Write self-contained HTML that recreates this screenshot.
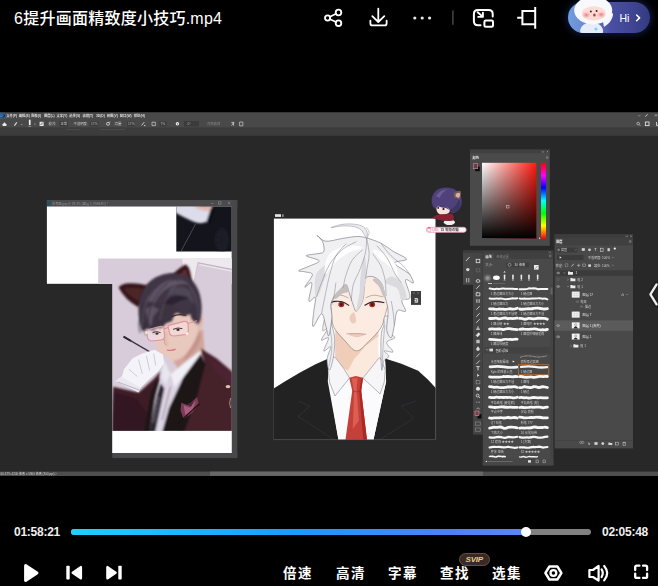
<!DOCTYPE html>
<html lang="zh-CN">
<head>
<meta charset="utf-8">
<title>6提升画面精致度小技巧.mp4</title>
<style>
html,body{margin:0;padding:0;background:#000;}
body{width:658px;height:586px;position:relative;overflow:hidden;font-family:"Liberation Sans","Noto Sans CJK SC",sans-serif;color:#fff;}
.abs{position:absolute;}
#title{left:14px;top:7.2px;font-size:16px;line-height:24px;font-weight:500;white-space:nowrap;letter-spacing:0.25px;}
#video{left:0;top:112px;width:658px;height:364px;}
.time{font-size:12px;line-height:14px;font-weight:700;top:525px;white-space:nowrap;letter-spacing:-0.25px;color:#efefef;}
.ctl{font-size:13.5px;line-height:20px;font-weight:700;top:563.8px;white-space:nowrap;letter-spacing:1.5px;}
#track{left:71px;top:529px;width:520px;height:6px;border-radius:3px;background:#808080;}
#prog{left:71px;top:529px;width:455px;height:6px;border-radius:3px;background:linear-gradient(90deg,#1fd0ff 0%,#1a9bff 50%,#4f80f6 85%,#5c86f6 100%);}
#knob{left:521px;top:527px;width:10px;height:10px;border-radius:50%;background:#fff;}
</style>
</head>
<body>
<div id="title" class="abs">6提升画面精致度小技巧.mp4</div>

<!-- top icons -->
<svg id="topicons" class="abs" style="left:300px;top:0" width="358" height="46" viewBox="300 0 358 46" fill="none" stroke="#fff" stroke-width="1.8" stroke-linecap="round" stroke-linejoin="round">
<!-- share -->
<circle cx="327.6" cy="18" r="2.6"/><circle cx="338.5" cy="12.5" r="2.8"/><circle cx="338.5" cy="23.2" r="2.8"/>
<path d="M330 16.8 L336 13.8 M330 19.2 L336 22"/>
<!-- download -->
<path d="M378.3 8.6 V21.6 M372.3 16.2 L378.3 22 L384.3 16.2 M370.4 20.6 V23.4 Q370.4 25.4 372.4 25.4 H384.6 Q386.6 25.4 386.6 23.4 V20.6"/>
<!-- more -->
<g fill="#e6e6e6" stroke="none"><circle cx="414.8" cy="18" r="1.6"/><circle cx="422.2" cy="18" r="1.6"/><circle cx="429.6" cy="18" r="1.6"/></g>
<path d="M452.9 11 V24.2" stroke="#4a4a4f" stroke-width="1.4"/>
<!-- pip -->
<g stroke-width="2">
<path d="M480.5 25.2 H478 Q473.9 25.2 473.9 21.2 V14 Q473.9 10 478 10 H488.6 Q492.7 10 492.7 14 V16.4"/>
<rect x="484.4" y="20.6" width="8.6" height="6.2" rx="1.4"/>
<path d="M477.7 12.3 L482.6 16.6 M478.2 16.9 H482.9 V12.6" stroke-width="1.9"/>
</g>
<!-- crop/rotate -->
<path d="M535.2 7 V28.8 M535.2 11 H522.4 V24.3 H535.2 M517.2 17.8 H522.4" stroke-width="2" stroke-linecap="butt" stroke-linejoin="miter"/>
</svg>


<!-- Hi pill -->
<div class="abs" id="hipill" style="left:568px;top:2px;width:82px;height:31px;border-radius:16px;background:linear-gradient(90deg,#6f9fe0 0%,#6b86cf 22%,#4a4fa2 52%,#3f4593 78%,#343a80 100%);box-shadow:0 0 7px 2px rgba(30,45,110,0.55);"></div>
<svg class="abs" style="left:560px;top:0" width="98" height="40" viewBox="560 0 98 40">
<defs><clipPath id="pillclip"><rect x="568" y="-10" width="82" height="43" rx="15.5"/></clipPath>
<radialGradient id="cheek"><stop offset="0" stop-color="#f5707e"/><stop offset="1" stop-color="#f9b5b5" stop-opacity="0"/></radialGradient></defs>
<g clip-path="url(#pillclip)">
<ellipse cx="591.6" cy="31" rx="11.4" ry="9" fill="#e6edf9"/>
<path d="M603 22 Q609 19 611 13 Q613 12 613 15 Q612 22 604 27 Z" fill="#f4f7fc"/>
<ellipse cx="593.2" cy="10.4" rx="19" ry="14" fill="#f7f9fd"/>
<ellipse cx="593.8" cy="13.4" rx="11.8" ry="7.2" fill="#fbdcd6"/>
<ellipse cx="586.3" cy="15" rx="4.8" ry="3.6" fill="url(#cheek)"/>
<ellipse cx="601.2" cy="14.6" rx="4.8" ry="3.6" fill="url(#cheek)"/>
<circle cx="590.8" cy="11.6" r="1" fill="#5a1a22"/><circle cx="596.6" cy="11" r="1" fill="#5a1a22"/>
<ellipse cx="594.4" cy="15" rx="1.3" ry="1.6" fill="#d5303a"/>
<circle cx="596" cy="29" r="1.6" fill="#7fd0ee"/>
</g>
<path d="M636.6 15 L639.6 17.9 L636.6 20.8" fill="none" stroke="#fff" stroke-width="1.5" stroke-linecap="round" stroke-linejoin="round"/>
</svg>
<div class="abs" style="left:619.5px;top:11px;font-size:10.5px;line-height:14px;font-weight:400;color:#fff">Hi</div>

<!-- video frame -->
<svg id="video" class="abs" width="658" height="364" viewBox="0 112 658 364">
<defs>
<filter id="b1" x="-20%" y="-20%" width="140%" height="140%"><feGaussianBlur stdDeviation="0.45"/></filter>
<filter id="b2" x="-20%" y="-20%" width="140%" height="140%"><feGaussianBlur stdDeviation="0.8"/></filter>
<filter id="b3" x="-20%" y="-20%" width="140%" height="140%"><feGaussianBlur stdDeviation="1.5"/></filter>
</defs>
<rect x="0" y="112" width="658" height="364" fill="#282828"/>
<rect x="0" y="112" width="658" height="0.5" fill="#111"/>
<rect x="0" y="112.4" width="658" height="15.4" fill="#494949"/>
<rect x="0" y="127.8" width="658" height="8" fill="#3c3c3c"/>
<rect x="0" y="471.6" width="658" height="4.4" fill="#4e4e4e"/>
<rect x="210" y="471.6" width="273" height="4.2" fill="#686868"/>
<!-- ps logo -->
<path d="M0 113.2 H3.2 Q5.4 113.4 5.6 115.6 Q5.4 117.8 3.2 118 H0 Z" fill="#12345c" stroke="#3f8fd8" stroke-width="0.5" filter="url(#b1)"/>
<path d="M0.3 115 H3.6 M0.3 116.4 H2.6" stroke="#7fc0ff" stroke-width="0.6" filter="url(#b1)"/>
<!-- menu text -->
<g font-family="'Liberation Sans','Noto Sans CJK SC',sans-serif" font-size="3.3" font-weight="700" fill="#dedede" filter="url(#b1)">
<text x="6.2" y="116.9">文件(F)</text><text x="18.8" y="116.9">编辑(E)</text><text x="31.3" y="116.9">图像(I)</text><text x="43.9" y="116.9">图层(L)</text><text x="56.4" y="116.9">文字(Y)</text><text x="69.2" y="116.9">选择(S)</text><text x="82.4" y="116.9">滤镜(T)</text><text x="96" y="116.9">3D(D)</text><text x="106.8" y="116.9">视图(V)</text><text x="119.8" y="116.9">窗口(W)</text><text x="133.8" y="116.9">帮助(H)</text>
</g>
<!-- options bar -->
<g filter="url(#b1)">
<path d="M2.6 124.2 L4.5 122.2 L6.4 124.2 V126 H2.6 Z" fill="#e8e8e8"/>
<path d="M14.4 125.6 L16.8 122.4" stroke="#dcdcdc" stroke-width="1.1"/>
<rect x="20.6" y="124" width="2" height="0.6" fill="#9a9a9a"/>
<rect x="28.9" y="119.6" width="1.7" height="5.6" rx="0.8" fill="#f2f2f2"/>
<rect x="28.4" y="126" width="2.8" height="0.6" fill="#b0b0b0"/>
<rect x="34" y="123.6" width="1.6" height="1" fill="#8a8a8a"/>
<rect x="39.6" y="121.8" width="4" height="4.2" fill="#e4e4e4"/>
<path d="M40.6 125 L42.8 122.6" stroke="#444" stroke-width="0.8"/>
<rect x="59.5" y="121.4" width="8.5" height="5" fill="#3a3a3a"/>
<rect x="89.6" y="121.4" width="9" height="5" fill="#3d3d3d"/>
<rect x="127" y="121.4" width="7.6" height="5" fill="#3d3d3d"/>
<rect x="159.4" y="121.4" width="7.4" height="5" fill="#3d3d3d"/>
<rect x="184" y="121.2" width="15" height="5.2" fill="#3a3a3a"/>
<g font-family="'Liberation Sans','Noto Sans CJK SC',sans-serif" font-size="3.3" fill="#cfcfcf">
<text x="48.6" y="125.2">模式:</text><text x="60.4" y="125.2">正常</text><text x="73.6" y="125.2">不透明度:</text><text x="91" y="125.2" fill="#b8b8b8">17%</text>
<text x="114.6" y="125.2">流量:</text><text x="128" y="125.2" fill="#b8b8b8">17%</text><text x="160.4" y="125.2" fill="#b8b8b8">7%</text>
<text x="187.6" y="125.2" fill="#b8b8b8">0°</text><text x="207" y="125.2" fill="#8a8a8a">对称选项</text>
</g>
<circle cx="108" cy="123.8" r="1.5" fill="none" stroke="#dadada" stroke-width="0.8"/><path d="M108.6 123.2 L110 121.6" stroke="#dadada" stroke-width="0.7"/>
<path d="M141.6 125.4 L144.2 122.2 M144 125.6 h1.4" stroke="#d8d8d8" stroke-width="0.9"/>
<path d="M152 122.2 h3.4 v3.4 h-3.4 z" stroke="#d0d0d0" stroke-width="0.7" fill="none"/>
<circle cx="177.4" cy="123.8" r="1.7" fill="#ececec"/><circle cx="177.4" cy="123.8" r="0.6" fill="#555"/>
<path d="M231.6 125.4 L234 122.4 M231.4 122.4 h2 v3.2" stroke="#d8d8d8" stroke-width="0.8" fill="none"/>
<path d="M239.6 122 h3.2 v3.8 h-3.2 z" stroke="#cfcfcf" stroke-width="0.7" fill="none"/>
<rect x="66" y="129.2" width="14" height="0.6" fill="#565656"/><rect x="100" y="129.2" width="25" height="0.6" fill="#565656"/>
<!-- right window controls -->
<path d="M638 115.8 h2.4" stroke="#9a9a9a" stroke-width="0.7"/>
<path d="M645.2 116.6 l2.4 -2.2" stroke="#c8c8c8" stroke-width="1"/>
<path d="M655 114.4 l2 2 m0 -2 l-2 2" stroke="#c8c8c8" stroke-width="0.7"/>
<circle cx="638.2" cy="123.6" r="1.3" fill="none" stroke="#d0d0d0" stroke-width="0.7"/><path d="M639.2 124.6 l1.2 1.2" stroke="#d0d0d0" stroke-width="0.7"/>
<rect x="645.4" y="122" width="3.6" height="3.6" fill="none" stroke="#e0e0e0" stroke-width="0.9"/>
<path d="M656.6 122 v3.6 h1.4" fill="none" stroke="#e0e0e0" stroke-width="0.9"/>
</g>
<text x="0.6" y="474.9" font-family="'Liberation Sans','Noto Sans CJK SC',sans-serif" font-size="3" fill="#cfcfcf" filter="url(#b1)">66.67%   4200 像素 x 5800 像素 (300 ppi)   〉</text>
<!-- left reference window -->
<g id="leftwin">
<rect x="46.8" y="200" width="190.5" height="6.6" fill="#4b4b4d"/>
<rect x="231.7" y="200" width="5.6" height="258.1" fill="#48484b"/>
<rect x="112.2" y="452" width="125.1" height="6.1" fill="#48484b"/>
<rect x="46.9" y="206.5" width="184.8" height="77.3" fill="#ffffff"/>
<rect x="47.4" y="201.6" width="3" height="3.6" fill="#0c5c6e" filter="url(#b1)"/>
<text x="52" y="205" font-family="'Liberation Sans','Noto Sans CJK SC',sans-serif" font-size="3.2" fill="#8e8e8e" filter="url(#b1)">参考图.jpg @ 33.3% (图层 1, RGB/8#) *</text>
<g stroke="#8a8a8a" stroke-width="0.6" fill="none" filter="url(#b1)"><path d="M211 203.6 h2.6"/><rect x="218.4" y="201.8" width="2.6" height="2.4"/><path d="M227.8 201.8 l2.4 2.4 m0 -2.4 l-2.4 2.4"/></g>
<!-- dark photo top-right -->
<clipPath id="cpA"><rect x="176.3" y="206.5" width="55.4" height="45.1"/></clipPath>
<g clip-path="url(#cpA)">
<rect x="176" y="205" width="56" height="47" fill="#14141c"/>
<g filter="url(#b2)">
<path d="M175 204 H213 L206.5 222 Q200 224.5 193 221.5 Q183 217 175 212.5 Z" fill="#dcdcea"/>
<path d="M194 204 H213 L210.5 211 Q202 211.5 194 207 Z" fill="#e2b8b0"/>
<path d="M200 204 h13 v2 h-13z" fill="#2a1a1a"/>
<path d="M206.5 222 L211 208 L214 208 L209 224 Z" fill="#0d0d14"/>
</g>
<path d="M195.6 224 L180.6 252" stroke="#5c5c72" stroke-width="0.7" filter="url(#b1)"/>
<ellipse cx="222" cy="240" rx="7" ry="12" fill="#1c1c26" filter="url(#b3)"/>
</g>
</g>
<!-- main photo (cat-ear man) -->
<clipPath id="cpB"><path d="M98.2 258.5 H231.8 V430.9 H112.2 V283.8 H98.2 Z"/></clipPath>
<g clip-path="url(#cpB)">
<rect x="98" y="258" width="134" height="174" fill="#d8ccda"/>
<!-- window frame bg top-right -->
<g filter="url(#b1)" fill="none">
<path d="M182 258 L232 258 L232 269 L198 262.4 L192.6 292 L187 292 Z" fill="#eee9ee"/>
<path d="M197.8 262.6 L232 269.4" stroke="#aaa0aa" stroke-width="0.6"/>
<path d="M197.8 262.6 L192.8 288" stroke="#b0a6b0" stroke-width="0.5"/>
<path d="M199.4 264.6 L232 271.2" stroke="#f0ecf0" stroke-width="1"/>
</g>
<rect x="98" y="405" width="134" height="27" fill="#cfc4d2" filter="url(#b3)"/>
<!-- ears -->
<g filter="url(#b2)">
<path d="M118.6 287.6 Q121 283.4 130 283.2 Q141 283 149.6 286.4 L150 298 L138 307 Q125 300 118.6 287.6 Z" fill="#35191b"/>
<path d="M124 288.6 Q133 286 143 289 L139 301 Q129 296.6 124 288.6 Z" fill="#4c2628"/>
<path d="M170 279 Q175 270 185.4 264.6 Q189.6 266 191 276 Q192.4 286 194 297 L178 293 Z" fill="#35191b"/>
<path d="M177 279 Q181.6 271.6 186 269 Q188.6 277 190 290 L181.6 287 Z" fill="#5e2e30"/>
</g>
<!-- neck + face -->
<g filter="url(#b2)">
<path d="M186 332 Q196 335 203 329 L204.6 352 Q196 367 182 374 L173 361 Z" fill="#d2a69c"/>
<path d="M151 322 Q151.6 337 155.6 346 Q161 356 173 361 Q180 360.4 187 353 Q195 343 199.6 329 Q202 320 199 310 L170 304 Z" fill="#e9c8be"/>
<path d="M187 353 Q195 343 199.6 329 L201 338 Q195 354 183 361.6 Z" fill="#c4948a"/>
<path d="M198 316 Q203.6 314 203 322 Q202 329 198 331 Z" fill="#e2b8ac"/>
<path d="M166 332 Q164.6 342 167.6 346" stroke="#d8aa9e" stroke-width="1.2" fill="none"/>
</g>
<!-- hair -->
<g filter="url(#b2)">
<path d="M142.3 331.5 Q138 322 138.4 306 Q139.6 293 147 284 Q156 274.6 170.2 273 Q181 272.6 189 277.6 Q197 284 200 295 Q203 307 200.6 319 Q199.4 323.6 196.6 325 Q197.6 318 192 313 Q187 316.6 182.4 315.6 Q176 312 172.7 310.8 Q167 315 163 320.5 Q160 327 154.4 330.2 Q151 331 147.1 327.8 Q145 330 142.3 331.5 Z" fill="#3f3644"/>
<path d="M149 300 Q154 288 166 282 Q178 278 190 284 Q180 283 170 287 Q160 292 155 302 Q150 312 149.6 322 Q146 311 149 300 Z" fill="#5e5566"/>
<path d="M170 288 Q181 284 193 292 Q197 300 197 310 Q192 300 184 296 Q176 293 168 296 Z" fill="#4e4656"/>
<path d="M158 312 Q162 302 171 297 Q180 294 190 298 Q180 300 173 304.6 Q167 309 163 318 Z" fill="#2c2430"/>
<path d="M143 316 Q144 304 150 296 M146 322 Q147.6 312 153 304" stroke="#6a6072" stroke-width="0.8" fill="none"/>
<path d="M139.2 306.1 L140.8 323.0 L144.1 329.9 L148.1 328.4 L150.7 330.7 L154.6 326.4 L160.7 328.9 L166.1 323.3 L171.8 321.2 L174.8 314.1 L180.7 310.8 L169.9 304.6 L148.4 301.5 Z" fill="#3c3340"/>
<path d="M189.1 309.2 L191.4 318.4 L195.3 323.0 L198.3 316.9 L199.9 309.2 L194.5 303.1 Z" fill="#3c3340"/>
<path d="M145.4 309.2 L148.4 323.0 L151.5 326.1 L153.0 316.9 L159.2 309.2 L151.5 306.1 Z" fill="#5a5162"/>
<g fill="none" stroke="#6d6374" stroke-width="0.7" opacity="0.85">
<path d="M172 279 Q156 284 147 300 Q142 312 142 326"/>
<path d="M176 280 Q162 288 154 302 Q149 314 150 328"/>
<path d="M180 281 Q170 290 164 304 Q161 312 160 320"/>
<path d="M182 280 Q192 286 196 298 Q199 308 198 318"/>
<path d="M178 279 Q188 283 193 292"/>
</g>
<g fill="none" stroke="#2a2230" stroke-width="0.8">
<path d="M168 283 Q156 292 151 306 Q148 316 148 326"/>
<path d="M186 284 Q193 292 195 304"/>
<path d="M139.6 318 Q138 326 140 333 M144.6 322 Q144 330 146 335 M152 326 Q152.6 331 155 334"/>
</g>
</g>
<!-- glasses -->
<g filter="url(#b1)" fill="none" stroke="#dd93a8" stroke-width="1.1">
<path d="M146.6 332 Q147 329.6 150 329 L160.6 326.4 Q163.6 326 164 329 L164.6 336 Q164.6 339.6 161 340 L152 341 Q148.6 341 147.6 337.6 Z" fill="rgba(255,245,248,0.35)"/>
<path d="M168 325.6 L184 321.4 Q187.6 321 188 324 L188.4 330.6 Q188 334 185 334.6 L174 336 Q170 336 169.4 332.6 Z" fill="rgba(255,245,248,0.35)"/>
<path d="M164 329 L168 327.6"/>
<path d="M188 323.6 L197 320.6" stroke-width="0.9"/>
</g>
<circle cx="146.4" cy="332.6" r="1.6" fill="#f4e0c0" filter="url(#b1)"/>
<circle cx="187" cy="333.6" r="1.5" fill="#f6ece0" filter="url(#b1)"/>
<g filter="url(#b1)">
<path d="M152.6 332.6 q3.8 -2 8 0" stroke="#3a2428" stroke-width="0.9" fill="none"/><ellipse cx="157" cy="333.6" rx="1.5" ry="1.2" fill="#3a2a30"/>
<path d="M173 329.4 q4.6 -2.4 9.4 -0.8" stroke="#3a2428" stroke-width="0.9" fill="none"/><ellipse cx="178" cy="329.8" rx="1.6" ry="1.3" fill="#3a2a30"/>
<path d="M171.6 316.6 q7 -3.4 14.6 -1.2" stroke="#3a2c34" stroke-width="1.2" fill="none"/><path d="M164.6 336 q-1.4 6 1.6 9.4" stroke="#d0a094" stroke-width="1" fill="none"/><path d="M167 349.8 q4 1.4 8.6 -0.6" stroke="#cf7a80" stroke-width="1.4" fill="none"/>
</g>
<!-- pen -->
<path d="M123.6 336.6 L158 356.6" stroke="#3a3640" stroke-width="1.3" filter="url(#b1)"/>
<path d="M123.6 336.6 L131 341" stroke="#2a2630" stroke-width="1.9" filter="url(#b1)"/>
<!-- suit -->
<g filter="url(#b2)">
<path d="M200.6 348.5 L216.4 358.2 L233.5 372.8 L233.5 432.4 L177.5 432.4 L192.1 388.6 L204.3 361.9 Z" fill="#45202a"/>
<path d="M206.7 357.0 L233.5 374.0 L233.5 388.6 L216.4 371.6 Z" fill="#54283a" opacity="0.6"/>
<path d="M161.0 371.1 L153.7 378.9 L138.6 392.5 L113.1 386.7 L111.9 432.4 L149.6 432.4 L156.1 388.6 Z" fill="#3e1c26"/>
<path d="M113.1 392.3 L136.2 398.4 L147.1 412.9 L148.4 432.4 L111.9 432.4 Z" fill="#321620"/>
<path d="M162.0 374.0 L172.7 386.2 L187.3 376.5 L173.9 400.8 L165.9 432.4 L153.7 432.4 L159.5 398.4 Z" fill="#dcd6e4"/>
<path d="M170.7 374.5 L182.4 364.3 L200.6 350.2 L199.9 357.5 L183.6 376.5 L174.1 387.2 Z" fill="#f0eef6"/>
<path d="M163.7 359.5 L170.7 374.5 L165.9 383.3 L161.0 376.5 Z" fill="#e8e6f0"/>
<path d="M200.6 354.1 L205.3 364.3 L197.0 395.9 L183.9 432.4 L162.0 432.4 L169.0 408.1 L183.6 377.0 Z" fill="#1b1317"/>
<path d="M160.0 377.9 L153.7 400.8 L149.3 432.4 L144.0 432.4 L150.8 393.5 L155.7 381.3 Z" fill="#1b1317"/>
<path d="M161.0 383.3 L164.4 388.6 L155.2 432.4 L149.3 432.4 L157.1 395.9 Z" fill="#2b2630"/>
<path d="M159.1 396.4 L153.7 422.7" stroke="#9a90a6" stroke-width="0.7" fill="none"/>
<path d="M170.7 386.2 L162.0 420.2" stroke="#6a2a3a" stroke-width="0.6" fill="none"/>
</g>
<!-- glove -->
<g filter="url(#b1)">
<path d="M121.1 378.9 L124.0 369.2 L132.6 358.2 L142.3 353.4 L154.4 349.7 L162.9 354.6 L164.2 363.1 L158.1 371.6 L148.4 380.1 L139.8 388.6 L126.5 386.2 Z" fill="#f4f3f8"/>
<path d="M115.0 381.3 L121.1 376.5 L140.6 387.7 L138.6 392.5 Z" fill="#e9e7ef"/>
<path d="M138.6 359.5 L142.3 374.0 M146.4 355.8 L149.6 370.4 M153.7 353.4 L155.7 365.5 M128.9 369.2 L137.4 376.5" stroke="#c4c0d0" stroke-width="0.8" fill="none"/>
<path d="M117.2 381.8 L139.4 390.1" stroke="#a8a0b4" stroke-width="0.7" fill="none"/>
</g>
<!-- pocket square -->
<g filter="url(#b1)">
<path d="M181.2 402.7 L188.5 405.2 L197.0 397.1 L198.7 403.7 L192.1 412.9 L183.6 419.0 L180.5 410.5 Z" fill="#7a3a54"/>
<path d="M183.6 405.2 L189.7 407.6 L196.0 400.8 L192.1 411.0 L185.3 414.9 Z" fill="#a85c7e"/>
<path d="M187.3 403.7 L193.3 402.0 L190.9 406.9 Z" fill="#4a2838"/>
<path d="M177.5 423.9 L199.4 403.7" stroke="#160e12" stroke-width="1.1" fill="none"/>
<ellipse cx="228" cy="386.6" rx="2.4" ry="1.6" fill="#dcc4a4"/>
<path d="M230.6 398 q-2 5 0 10" stroke="#b8a890" stroke-width="0.8" fill="none"/>
</g>
</g>
<rect x="112.2" y="430.9" width="119.6" height="22.1" fill="#ffffff"/>
<!-- center canvas -->
<g id="center">
<rect x="273.9" y="218.6" width="162" height="221.3" fill="#ffffff"/>
<rect x="275" y="214.2" width="6" height="2.7" fill="#e4e4e4" filter="url(#b1)"/><rect x="282.4" y="214.3" width="1" height="2.6" fill="#d0d0d0" filter="url(#b1)"/>
<clipPath id="cpC"><rect x="273.9" y="218.6" width="162" height="221.3"/></clipPath>
<g clip-path="url(#cpC)">
<g filter="url(#b1)">
<path d="M335.3 330.5 L335.3 357.1 L343.5 368.1 L349.4 377.7 L363.0 377.7 L369.4 370.1 L378.4 358.4 L378.4 330.5 Z" fill="#fbe9de"/>
<path d="M335.3 330.5 L335.3 357.1 L343.5 368.1 L348.0 370.7 L354.1 359.1 L365.7 345.8 L378.4 336.2 L378.4 330.5 Z" fill="#efcdb9"/>
<path d="M330.8 292.8 C328.4 297.6 331.0 305.6 331.4 311.2 C331.9 316.8 331.4 321.8 333.5 326.6 C335.6 331.3 340.3 335.8 344.1 339.9 C348.0 343.9 352.3 350.7 356.4 350.9 C360.5 351.2 364.7 345.3 368.7 341.5 C372.7 337.7 377.8 332.6 380.6 328.2 C383.3 323.8 383.8 320.5 385.1 315.3 C386.3 310.1 389.5 303.4 388.1 296.9 C386.8 290.4 380.8 280.2 376.9 276.4 C373.0 272.7 369.7 273.3 364.6 274.4 C359.5 275.4 351.8 279.5 346.2 282.6 C340.5 285.6 333.3 288.0 330.8 292.8 Z" fill="#fcebe1" stroke="#5a4a48" stroke-width="0.45"/>
</g>
<g filter="url(#b1)">
<path d="M354.0 312.2 C355.0 312.9 356.3 319.6 356.0 321.4 C355.7 323.3 353.0 323.8 351.9 323.1 C350.8 322.4 349.1 319.2 349.5 317.4 C349.8 315.5 352.9 311.6 354.0 312.2 Z" fill="#ecccbd"/>
<path d="M348.6 334.3 C348.6 333.8 353.8 333.9 356.4 333.9 C359.1 334.0 364.6 334.2 364.6 334.7 C364.6 335.3 359.1 337.3 356.4 337.2 C353.8 337.1 348.6 334.9 348.6 334.3 Z" fill="#eec8b8"/>
<path d="M346.6 333.9 C348.2 333.9 353.1 333.4 356.4 333.5 C359.7 333.6 364.6 334.2 366.2 334.3" stroke="#8a625c" stroke-width="0.5" fill="none"/>
<path d="M331.4 302.6 C332.2 301.7 336.1 300.6 339.0 301.0 C341.9 301.4 348.3 304.0 348.6 305.1 C349.0 306.2 343.4 307.3 341.1 307.5 C338.7 307.7 335.9 307.1 334.3 306.3 C332.7 305.5 330.7 303.5 331.4 302.6 Z" fill="#f1e7e0"/>
<path d="M365.0 305.1 C365.5 304.0 370.7 301.8 373.8 301.4 C376.9 301.0 382.4 301.8 383.4 302.6 C384.5 303.4 382.1 305.5 380.0 306.3 C377.8 307.1 373.2 307.7 370.7 307.5 C368.3 307.3 364.5 306.1 365.0 305.1 Z" fill="#f1e7e0"/>
<ellipse cx="341.3" cy="304.5" rx="2.9" ry="2.8" fill="#a32d27"/>
<ellipse cx="372.2" cy="304.5" rx="2.9" ry="2.8" fill="#a32d27"/>
<ellipse cx="341.3" cy="304.5" rx="1.2" ry="1.4" fill="#4a1210"/>
<ellipse cx="372.2" cy="304.5" rx="1.2" ry="1.4" fill="#4a1210"/>
<path d="M330.2 303.0 C331.0 302.8 332.9 301.6 334.9 301.4 C336.9 301.2 339.7 301.1 342.1 301.8 C344.5 302.5 348.1 304.9 349.2 305.5" stroke="#2a2224" stroke-width="1.1" fill="none"/>
<path d="M364.6 305.5 C365.6 304.9 368.5 302.9 370.7 302.2 C373.0 301.6 375.7 301.5 377.9 301.6 C380.2 301.7 383.2 302.4 384.3 302.6" stroke="#2a2224" stroke-width="1.1" fill="none"/>
<path d="M332.9 296.9 C334.2 296.6 338.4 295.0 341.1 295.2 C343.7 295.5 347.4 297.6 348.6 298.1" stroke="#8a6a64" stroke-width="0.5" fill="none"/>
<path d="M365.6 297.7 C367.0 297.3 370.9 295.4 373.8 295.2 C376.7 295.1 381.5 296.6 383.0 296.9" stroke="#8a6a64" stroke-width="0.5" fill="none"/>
</g>
<g filter="url(#b1)">
<path d="M272.5 389.2 L284.8 381.4 L300.5 372.2 L315.5 364.2 L327.3 358.9 L328.8 381.4 L339.0 442.8 L272.5 442.8 Z" fill="#222224"/>
<path d="M436.2 388.6 L428.1 379.8 L418.2 370.8 L401.4 363.8 L385.1 358.5 L386.1 381.4 L372.8 442.8 L436.2 442.8 Z" fill="#222224"/>
<path d="M328.8 360.9 L327.8 381.4 L339.0 442.8 L372.8 442.8 L386.1 381.4 L385.1 362.0 L356.4 373.2 Z" fill="#fbfbfd"/>
<path d="M335.3 352.3 L335.3 357.1 L343.5 368.1 L349.4 377.7 L363.0 377.7 L369.4 370.1 L378.4 358.4 L378.4 352.3 Z" fill="#fbe9de"/>
<path d="M335.3 352.3 L335.3 357.1 L343.5 368.1 L348.0 370.7 L354.1 359.1 L361.0 351.6 Z" fill="#efcdb9"/>
<path d="M333.0 356.7 L328.2 370.1 L329.6 382.3 L335.0 396.0 L349.5 378.0 L343.5 368.1 L335.3 357.5 Z" stroke="#70707a" stroke-width="0.5" fill="#f6f6f9"/>
<path d="M380.1 357.5 L385.3 370.1 L384.2 382.3 L380.1 393.9 L362.9 378.0 L369.4 370.1 L378.4 358.6 Z" stroke="#70707a" stroke-width="0.5" fill="#f6f6f9"/>
<path d="M299.1 401.5 L309.7 406.0 L298.1 416.6 L339.0 442.8" stroke="#3a3a3e" stroke-width="0.6" fill="none"/>
<path d="M415.8 400.9 L401.4 406.0 L413.7 418.3 L374.8 442.8" stroke="#3a3a3e" stroke-width="0.6" fill="none"/>
<path d="M349.2 377.7 L355.8 376.1 L363.1 377.7 L361.2 390.8 L367.1 441.0 L345.3 441.0 L352.2 390.8 Z" fill="#c6413a"/>
<path d="M351.7 378.5 L357.5 377.7 L356.6 389.2 L358.9 420.6 L352.8 428.8 L354.1 391.9 Z" fill="#db5e52"/>
<path d="M361.0 379.6 L362.9 378.2 L361.2 390.8 L367.1 441.0 L363.4 441.0 L359.3 391.9 Z" fill="#a82a23"/>
<path d="M352.2 390.8 L356.6 391.9 L361.2 390.8" stroke="#8e241e" stroke-width="0.5" fill="none"/>
</g>
<g filter="url(#b1)">
<path d="M325.5 316.8 C324.1 319.1 322.3 328.6 322.7 330.5 C323.2 332.3 328.4 326.1 328.2 327.7 C328.0 329.3 321.3 338.3 321.4 340.0 C321.4 341.7 328.1 336.1 328.5 338.0 C328.9 339.8 323.5 349.5 323.8 350.9 C324.2 352.4 330.1 345.5 330.6 346.8 C331.2 348.2 327.3 355.3 327.1 359.1 C326.9 363.0 328.5 370.4 329.6 370.1 C330.6 369.7 332.5 361.9 333.4 357.1 C334.2 352.3 334.7 345.6 334.7 341.4 C334.8 337.2 334.2 334.6 333.7 331.8 C333.2 329.1 332.2 327.5 331.7 325.0 C331.3 322.5 332.2 318.2 331.2 316.8 C330.1 315.4 326.9 314.5 325.5 316.8 Z" fill="#f0f0f3" stroke="#74747e" stroke-width="0.55"/>
<path d="M384.4 316.8 C383.5 318.2 384.4 322.3 383.9 325.0 C383.4 327.7 381.9 329.1 381.4 333.2 C380.9 337.3 380.8 343.4 380.9 349.6 C380.9 355.7 381.2 368.2 381.7 370.1 C382.2 371.9 382.7 363.1 383.9 360.8 C385.1 358.4 388.9 357.8 388.9 356.1 C389.0 354.5 383.5 351.7 384.2 350.9 C384.8 350.2 392.6 353.2 393.0 351.8 C393.4 350.3 386.3 344.8 386.6 342.5 C386.9 340.1 394.7 339.4 394.8 337.6 C395.0 335.7 388.0 333.9 387.6 331.6 C387.2 329.2 392.0 326.1 392.4 323.6 C392.7 321.2 390.9 317.9 389.6 316.8 C388.3 315.7 385.4 315.4 384.4 316.8 Z" fill="#f0f0f3" stroke="#74747e" stroke-width="0.55"/>
<path d="M328.9 325.0 C329.3 327.3 331.2 334.1 331.6 338.7 C332.0 343.2 331.9 347.8 331.5 352.3 C331.0 356.9 329.4 363.7 329.0 366.0" stroke="#7c7c86" stroke-width="0.45" fill="none"/>
<path d="M384.8 325.0 C384.6 327.3 384.0 334.1 383.6 338.7 C383.3 343.2 383.0 347.8 382.8 352.3 C382.6 356.9 382.3 363.7 382.3 366.0" stroke="#7c7c86" stroke-width="0.45" fill="none"/>
</g>
<g filter="url(#b1)">
<path d="M366.6 237.9 C370.7 239.1 376.5 241.0 381.0 243.2 C385.4 245.5 389.0 248.8 393.3 251.4 C397.5 254.1 406.4 257.3 406.6 259.2 C406.8 261.1 394.7 260.9 394.5 262.9 C394.3 264.9 402.9 269.3 405.5 271.3 C408.1 273.3 408.7 272.8 410.0 274.8 C411.3 276.7 414.1 282.1 413.3 283.0 C412.6 283.9 406.1 277.7 405.5 280.1 C405.0 282.5 410.7 293.9 410.0 297.3 C409.4 300.7 402.6 298.2 401.9 300.6 C401.1 302.9 406.3 309.5 405.5 311.2 C404.8 312.9 399.2 308.4 397.4 310.8 C395.5 313.2 395.3 321.0 394.3 325.5 C393.3 330.0 392.5 337.1 391.2 337.8 C390.0 338.5 387.2 334.1 386.7 329.6 C386.2 325.2 388.4 316.7 388.1 311.2 C387.9 305.8 386.1 301.3 385.1 296.9 C384.0 292.4 383.4 287.7 382.0 284.6 C380.6 281.5 378.8 279.8 376.9 278.5 C375.0 277.1 372.6 276.4 370.7 276.4 C368.9 276.4 366.7 276.4 365.6 278.5 C364.5 280.5 364.7 284.9 364.2 288.7 C363.7 292.4 363.9 297.2 362.6 301.0 C361.3 304.7 357.9 310.5 356.4 311.2 C354.9 311.9 354.5 308.1 353.3 305.1 C352.1 302.0 350.4 296.2 349.2 292.8 C348.1 289.4 347.5 285.3 346.2 284.6 C344.8 283.9 343.1 286.6 341.1 288.7 C339.0 290.7 335.6 294.2 333.9 296.9 C332.2 299.6 331.2 301.7 330.8 305.1 C330.5 308.5 332.2 312.2 331.8 317.4 C331.5 322.5 329.8 334.4 328.8 335.8 C327.8 337.1 326.9 329.2 325.7 325.5 C324.5 321.9 323.7 313.5 321.6 313.7 C319.5 313.8 314.3 327.0 313.0 326.6 C311.7 326.2 313.4 316.1 313.8 311.2 C314.2 306.3 316.3 299.0 315.5 297.3 C314.7 295.6 309.5 303.4 308.9 301.0 C308.3 298.6 312.5 285.3 311.8 283.0 C311.1 280.6 304.7 288.4 304.8 287.1 C304.9 285.7 312.3 277.3 312.4 274.8 C312.5 272.3 307.5 272.6 305.2 271.9 C302.9 271.2 298.0 271.6 298.7 270.7 C299.4 269.7 305.9 267.8 309.3 266.2 C312.7 264.5 319.7 262.6 319.2 260.9 C318.6 259.1 306.9 257.1 306.3 255.9 C305.6 254.8 312.6 254.6 315.5 253.9 C318.4 253.2 322.5 253.9 323.7 251.8 C324.9 249.8 323.7 244.3 322.6 241.6 C321.5 238.9 316.6 235.5 317.1 235.5 C317.6 235.4 321.5 240.7 325.7 241.2 C329.9 241.7 337.0 239.3 342.1 238.5 C347.2 237.8 352.3 236.6 356.4 236.5 C360.5 236.4 362.6 236.8 366.6 237.9 Z" fill="#f0f0f3" stroke="#6e6e78" stroke-width="0.6"/>
<path d="M364.6 255.9 C365.6 255.9 366.7 271.0 366.6 276.4 C366.6 281.9 364.9 284.6 364.2 288.7 C363.5 292.8 363.9 297.2 362.6 301.0 C361.3 304.7 356.9 312.6 356.4 311.2 C355.9 309.8 358.8 298.6 359.5 292.8 C360.2 287.0 359.7 282.6 360.5 276.4 C361.4 270.3 363.6 255.9 364.6 255.9 Z" fill="#d9d9de"/>
<path d="M315.5 276.4 C316.8 271.3 320.2 268.9 323.7 266.2 C327.1 263.4 335.6 258.3 335.9 260.0 C336.3 261.7 328.4 271.0 325.7 276.4 C323.0 281.9 321.3 289.4 319.6 292.8 C317.9 296.2 316.2 299.6 315.5 296.9 C314.8 294.2 314.1 281.5 315.5 276.4 Z" fill="#dcdce1"/>
<path d="M385.1 282.6 C384.0 280.5 388.5 276.4 391.2 276.4 C393.9 276.4 398.9 279.1 401.4 282.6 C404.0 286.0 406.6 294.0 406.6 296.9 C406.6 299.8 403.0 301.3 401.4 300.0 C399.9 298.6 400.1 291.6 397.4 288.7 C394.6 285.8 386.1 284.6 385.1 282.6 Z" fill="#dadadf"/>
<path d="M333.9 295.9 C334.7 294.1 339.0 290.2 341.1 288.3 C343.1 286.4 344.9 284.1 346.2 284.6 C347.4 285.1 349.3 289.6 348.6 291.2 C348.0 292.7 344.2 292.5 342.1 293.8 C340.0 295.1 337.3 298.6 335.9 298.9 C334.6 299.3 333.0 297.6 333.9 295.9 Z" fill="#c4bebe"/>
<path d="M376.9 278.5 C378.5 279.2 381.2 281.5 382.6 284.6 C384.0 287.7 385.4 295.0 385.5 296.9 C385.5 298.8 384.1 297.6 383.0 295.9 C381.9 294.2 380.6 289.3 378.9 286.6 C377.2 284.0 373.1 281.5 372.8 280.1 C372.4 278.7 375.2 277.7 376.9 278.5 Z" fill="#c9c3c3"/>
<path d="M331.8 251.8 C335.6 249.1 343.1 246.4 348.2 245.7 C353.3 245.0 362.6 246.6 362.6 247.8 C362.6 248.9 352.7 250.5 348.2 252.9 C343.8 255.3 339.7 258.5 335.9 262.1 C332.2 265.7 327.4 274.4 325.7 274.4 C324.0 274.4 324.7 265.8 325.7 262.1 C326.7 258.3 328.1 254.6 331.8 251.8 Z" fill="#fdfdfe"/>
<path d="M372.8 249.8 C373.8 249.1 381.3 251.5 385.1 253.9 C388.8 256.3 393.3 260.4 395.3 264.1 C397.4 267.9 398.4 276.1 397.4 276.4 C396.3 276.8 392.2 269.2 389.2 266.2 C386.1 263.1 381.7 260.7 378.9 258.0 C376.2 255.3 371.8 250.5 372.8 249.8 Z" fill="#fdfdfe"/>
<path d="M366.6 237.9 C366.5 240.2 366.6 246.8 365.6 251.8 C364.6 256.9 362.6 262.8 360.5 268.2 C358.5 273.7 354.9 279.1 353.3 284.6 C351.8 290.1 351.6 298.2 351.3 301.0" stroke="#7c7c86" stroke-width="0.5" fill="none"/>
<path d="M366.6 237.9 C367.1 240.6 369.0 248.8 369.1 253.9 C369.2 258.9 367.6 264.1 367.1 268.2 C366.5 272.3 365.9 276.8 365.6 278.5" stroke="#7c7c86" stroke-width="0.5" fill="none"/>
<path d="M356.4 241.6 C354.0 243.0 346.5 246.0 342.1 249.8 C337.6 253.6 333.2 258.7 329.8 264.1 C326.4 269.6 323.8 277.1 321.6 282.6 C319.4 288.0 317.3 294.5 316.5 296.9" stroke="#7c7c86" stroke-width="0.5" fill="none"/>
<path d="M346.2 243.7 C344.5 245.7 338.7 250.8 335.9 255.9 C333.2 261.1 331.5 268.2 329.8 274.4 C328.1 280.5 327.1 286.3 325.7 292.8 C324.3 299.3 322.3 309.8 321.6 313.3" stroke="#7c7c86" stroke-width="0.5" fill="none"/>
<path d="M362.6 249.8 C360.8 251.5 355.0 255.9 352.3 260.0 C349.6 264.1 347.7 269.8 346.2 274.4 C344.6 279.0 343.6 285.5 343.1 287.7" stroke="#7c7c86" stroke-width="0.5" fill="none"/>
<path d="M376.9 245.7 C378.6 247.8 384.0 253.2 387.1 258.0 C390.2 262.8 392.9 270.3 395.3 274.4 C397.7 278.5 400.4 281.2 401.4 282.6" stroke="#7c7c86" stroke-width="0.5" fill="none"/>
<path d="M372.8 253.9 C374.2 255.9 378.9 261.7 381.0 266.2 C383.0 270.6 384.2 275.6 385.1 280.5 C385.9 285.5 385.9 293.3 386.1 295.9" stroke="#7c7c86" stroke-width="0.5" fill="none"/>
<path d="M381.0 243.7 C382.7 245.7 387.5 252.2 391.2 255.9 C395.0 259.7 400.4 263.0 403.5 266.2 C406.6 269.3 409.0 273.3 410.0 274.8" stroke="#7c7c86" stroke-width="0.5" fill="none"/>
<path d="M335.9 282.6 C335.6 284.9 334.6 293.1 333.9 296.9 C333.1 300.6 331.8 303.7 331.4 305.1" stroke="#7c7c86" stroke-width="0.5" fill="none"/>
<path d="M391.2 301.0 C391.6 303.0 392.7 309.2 393.3 313.3 C393.8 317.4 394.1 323.5 394.3 325.5" stroke="#7c7c86" stroke-width="0.5" fill="none"/>
<path d="M366.6 237.9 C367.1 237.6 367.6 234.2 367.1 232.4 C366.5 230.6 365.7 228.2 363.6 226.9 C361.5 225.5 357.9 224.6 354.4 224.2 C350.8 223.8 346.0 223.8 342.1 224.4 C338.2 225.0 331.0 227.4 330.8 227.7 C330.7 228.0 337.3 226.3 341.1 226.1 C344.8 225.8 350.0 225.8 353.3 226.5 C356.7 227.1 359.1 228.4 360.9 229.7 C362.7 231.1 363.2 233.1 364.2 234.4 C365.1 235.8 366.2 238.3 366.6 237.9 Z" stroke="#8a8a92" stroke-width="0.5" fill="#ececf0"/>
<path d="M367.1 237.9 C367.4 237.0 369.2 234.2 369.1 232.4 C369.0 230.6 366.7 228.1 366.2 227.3" stroke="#8a8a92" stroke-width="0.45" fill="none"/>
</g>
</g>
<path d="M435.6 218.6 V439.6 H273.9" stroke="#5a5a5a" stroke-width="0.7" fill="none"/>
<rect x="411" y="291" width="10" height="13.9" fill="#3e3e3e" filter="url(#b1)"/>
<g filter="url(#b1)" fill="none"><path d="M413.2 293 h1.6 M417.4 293 h1.6" stroke="#8a8a8a" stroke-width="0.9"/><path d="M414.6 298.6 h3 v3.6 h-3 M416 298.6 v3.6 M414.4 300.4 h1.6" stroke="#f0f0f0" stroke-width="0.9"/></g>
</g>
<!-- chibi watermark -->
<g id="chibi">
<g filter="url(#b1)">
<path d="M454.6 220.4 Q459 220.6 463.2 222" stroke="#3a2a2a" stroke-width="0.7" fill="none"/>
<ellipse cx="449.4" cy="222.2" rx="5.6" ry="2.9" fill="#f2eeee"/>
<path d="M432.4 217.6 Q436 214.6 441 214 L452 213.4 Q455 217 453 220.6 Q446 222 438 219.6 Q434 219.6 432.4 217.6 Z" fill="#8a2434"/>
<path d="M431.4 202 Q431 192.6 438.6 188.8 Q446 185.6 454 188.8 Q461.6 193 462 201.6 Q462 209 455.6 212.6 Q451 214.6 449.8 210 Q447 205.4 440 205.6 Q436.6 206 436.4 209.6 Q432 207.6 431.4 202 Z" fill="#50437a" stroke="#2a2036" stroke-width="0.5"/>
<path d="M450 210 Q456 207 459 199 Q462 204 458.6 210 Q454 214 450 210 Z" fill="#3e3462"/>
<path d="M453.6 193 Q458.6 189.6 461 191.4 Q461.8 196 459.4 199.6 L454 197.4 Z" fill="#6c5c58"/>
<path d="M455.6 194.2 Q458.6 192 460 193.2 Q460.2 196 458.8 198 L455.6 196.6 Z" fill="#e4aaa4"/>
<path d="M436 196 Q440 190 447 189.6 Q441.6 192.6 439.6 198 Z" fill="#6a5c96"/>
<path d="M436.4 209 Q436.4 205.8 440 205.6 Q447 205.4 449.8 210 Q450 213.6 446 214 L440 214.2 Q436.6 213 436.4 209 Z" fill="#f8e2da"/>
<path d="M437.4 207.2 q0.8 -1 1.6 0 v1.6 h-1.6 z M442.6 208.2 q0.9 -1 1.8 0 v1.7 h-1.8 z" fill="#2c1c34"/>
<path d="M436.6 206.6 Q440 203.6 444.6 205.4 Q447.6 206.6 449.6 210 Q446 207.6 442 207.6 Q439 206.4 436.6 206.6 Z" fill="#4e3e7c"/>
</g>
<rect x="426.2" y="227.3" width="40" height="5" rx="2.5" fill="#fdf4f7" stroke="#f29ab4" stroke-width="0.8"/>
<g filter="url(#b1)">
<circle cx="429.2" cy="229.8" r="2.2" fill="#f7b7c8"/><path d="M427.2 228.2 q2 -1.8 4 0 z" fill="#d8324a"/>
<rect x="428.2" y="228.8" width="2" height="2" fill="#fff"/>
<text x="432.2" y="231.3" font-family="'Liberation Sans','Noto Sans CJK SC',sans-serif" font-size="3.4" font-weight="700" fill="#f08aaa">UID:</text>
<text x="440.4" y="231.3" font-family="'Liberation Sans','Noto Sans CJK SC',sans-serif" font-size="3.4" font-weight="700" fill="#4a3440">15 零隐の猫</text>
</g>
</g>
<!-- right panels -->
<g id="panels">
<defs>
<linearGradient id="cpW" x1="0" y1="0" x2="1" y2="0"><stop offset="0" stop-color="#ffffff"/><stop offset="1" stop-color="#ff1a10"/></linearGradient>
<linearGradient id="cpK" x1="0" y1="0" x2="0" y2="1"><stop offset="0" stop-color="#000" stop-opacity="0"/><stop offset="1" stop-color="#000" stop-opacity="1"/></linearGradient>
<linearGradient id="hue" x1="0" y1="0" x2="0" y2="1"><stop offset="0" stop-color="#ff0000"/><stop offset="0.17" stop-color="#ff00ff"/><stop offset="0.33" stop-color="#0000ff"/><stop offset="0.5" stop-color="#00ffff"/><stop offset="0.67" stop-color="#00ff00"/><stop offset="0.83" stop-color="#ffff00"/><stop offset="1" stop-color="#ff0000"/></linearGradient>
</defs>
<rect x="470" y="149.6" width="79.8" height="96.2" fill="#4a4a4a"/>
<rect x="470" y="149.6" width="79.8" height="3.6" fill="#404040"/>
<rect x="482" y="162.8" width="54.4" height="75.8" fill="url(#cpW)"/>
<rect x="482" y="162.8" width="54.4" height="75.8" fill="url(#cpK)"/>
<rect x="541" y="162.8" width="5" height="75.8" fill="url(#hue)"/>
<g filter="url(#b1)">
<text x="472.4" y="158.6" font-family="'Liberation Sans','Noto Sans CJK SC',sans-serif" font-size="3.4" fill="#e0e0e0" font-weight="700">颜色</text>
<rect x="475.2" y="166.6" width="4.4" height="4.6" fill="#0a0a0a"/>
<rect x="473.2" y="163.8" width="4.6" height="5" fill="#7a3440" stroke="#c8c8c8" stroke-width="0.4"/>
<rect x="506.6" y="205.6" width="2.4" height="2.4" fill="none" stroke="#d8c8c8" stroke-width="0.5"/>
<path d="M539 237.2 l1.6 1 l-1.6 1 z" fill="#e0e0e0"/>
<path d="M541.6 151 l1 0.8 l-1 0.8 M543.2 151 l1 0.8 l-1 0.8 M546.6 150.8 l1.6 1.6 m0 -1.6 l-1.6 1.6" stroke="#a8a8a8" stroke-width="0.5" fill="none"/>
<path d="M546 156.6 h2.4 m-2.4 0.9 h2.4 m-2.4 0.9 h2.4" stroke="#a0a0a0" stroke-width="0.4"/>
</g>
<rect x="463" y="250.6" width="10" height="34.2" fill="#464646"/>
<rect x="473" y="250.6" width="9.8" height="184" fill="#444444"/>
<rect x="463" y="250.6" width="19.8" height="2.4" fill="#3c3c3c"/>
<g filter="url(#b1)" stroke="#e2e2e2" fill="none" stroke-width="0.8">
<path d="M466 261 L469.6 257"/><circle cx="467.8" cy="269.6" r="1.7" fill="#d8d8d8" stroke="none"/><path d="M466.6 278 v4.4 m2.2 -4.4 v4.4" stroke-width="0.7"/>
<rect x="476.2" y="259.3" width="3.6" height="3.4"/>
<rect x="476.2" y="268.9" width="3.6" height="3" stroke-dasharray="0.8 0.6" stroke="#9a9a9a" stroke-width="0.5"/>
<ellipse cx="478.0" cy="281.0" rx="1.9" ry="1.4"/>
<path d="M476.3 288.8 l3.4 -3.6"/>
<path d="M476.2 292.8 h3.6 v3 h-3.6 z M477.2 292.8 v-1"/>
<path d="M476.6 299.2 v3.6 m1.4 -3.6 v3.6 m1.4 -3.6 v3.6" stroke-width="0.6"/>
<path d="M476.3 309.8 l3.4 -3.6"/>
<path d="M476.3 316.8 l3.4 -3.6"/>
<path d="M476.3 322.8 l3.4 -3.6"/>
<path d="M476.1 329.2 h3.8 M478.0 329.0 v-2.6" stroke-width="1"/>
<path d="M476.2 335.4 l2.4 -2.6 l1.4 1.4 l-2.4 2.6 z" fill="#e8e8e8"/>
<rect x="476.3" y="339.8" width="3.4" height="3.4" fill="#bcbcbc" stroke="none"/>
<path d="M478.0 346.2 l1.6 2.4 a1.7 1.7 0 1 1 -3.2 0 z" fill="#dcdcdc" stroke="none"/>
<path d="M476.3 357.1 l3.4 -3.6"/>
<path d="M476.3 364.1 l3.4 -3.6"/>
<path d="M476.3 366.6 h3.4 M478.0 366.6 v3.8" stroke-width="0.9"/>
<path d="M477.2 373.5 l0 3.6 l1 -1 l1.4 0 z" fill="#dcdcdc" stroke="none"/>
<path d="M476.2 380.6 h3.6 v3.2 h-3.6 z" stroke-dasharray="0.7 0.5" stroke-width="0.6"/>
<path d="M476.2 389.9 q-0.6 -3 1.8 -3.2 q2.4 0.2 1.8 3.2 q-1.8 1.4 -3.6 0 z" fill="#e4e4e4" stroke="none"/>
<circle cx="477.6" cy="395.6" r="1.4"/><path d="M478.7 396.7 l1.3 1.3"/>
<path d="M476.3 402.2 h0.7 m0.8 0 h0.7 m0.8 0 h0.7" stroke-width="0.7"/>
<path d="M476.6 408.7 q1.8 -1.6 3.2 0.4" stroke-width="0.6"/>
</g>
<g filter="url(#b1)"><rect x="477.6" y="414.2" width="4" height="4.4" fill="#0c0c0c"/><rect x="475" y="411" width="4" height="4.8" fill="#8a3444" stroke="#d8d8d8" stroke-width="0.4"/>
<rect x="475.6" y="422" width="4.6" height="3.2" fill="none" stroke="#8e8e8e" stroke-width="0.6"/><rect x="475.6" y="428" width="4.6" height="3.2" fill="none" stroke="#8e8e8e" stroke-width="0.6"/></g>
<rect x="482.8" y="250.6" width="70.6" height="214.8" fill="#494949"/>
<rect x="482.8" y="250.6" width="70.6" height="2.6" fill="#3e3e3e"/>
<rect x="482.8" y="253.2" width="70.6" height="5.8" fill="#404040"/>
<rect x="484.4" y="253.2" width="9.6" height="5.8" fill="#494949"/>
<g filter="url(#b1)" font-family="'Liberation Sans','Noto Sans CJK SC',sans-serif" font-size="3.1">
<text x="485.6" y="257.6" fill="#e8e8e8" font-weight="700">画笔</text><text x="496.6" y="257.6" fill="#8c8c8c">画笔设置</text>
<text x="485.6" y="266.2" fill="#bdbdbd">大小:</text>
<rect x="506" y="262.6" width="23" height="4.6" fill="#3c3c3c"/><circle cx="509.6" cy="264.8" r="1.5" fill="none" stroke="#cfcfcf" stroke-width="0.5"/><text x="514.6" y="266" fill="#dcdcdc">30 像素</text>
<rect x="534" y="265" width="4.6" height="4.6" fill="#eeeeee"/><path d="M535 268.8 l2.6 -2.8" stroke="#555" stroke-width="0.6"/>
<path d="M548.6 251.6 l0.9 0.7 l-0.9 0.7 M550 251.6 l0.9 0.7 l-0.9 0.7" stroke="#a0a0a0" stroke-width="0.4" fill="none"/><path d="M549 255 h2.4 m-2.4 0.9 h2.4 m-2.4 0.9 h2.4" stroke="#a0a0a0" stroke-width="0.4"/>
</g>
<g filter="url(#b2)"><circle cx="487.6" cy="278" r="2.6" fill="#9c9c9c"/></g>
<g filter="url(#b1)"><ellipse cx="496.4" cy="277.8" rx="3.4" ry="2.2" fill="#ffffff"/>
<rect x="503.8" y="274.6" width="1.5" height="5.2" rx="0.7" fill="#ececec"/><rect x="503.5" y="280.2" width="2" height="0.7" fill="#9a9a9a"/>
<rect x="512.2" y="274.6" width="1.5" height="5.2" rx="0.7" fill="#ececec"/><rect x="512.0" y="280.2" width="2" height="0.7" fill="#9a9a9a"/>
<rect x="520.6" y="274.6" width="1.5" height="5.2" rx="0.7" fill="#ececec"/><rect x="520.4" y="280.2" width="2" height="0.7" fill="#9a9a9a"/>
<rect x="528.2" y="274.6" width="1.5" height="5.2" rx="0.7" fill="#ececec"/><rect x="528.0" y="280.2" width="2" height="0.7" fill="#9a9a9a"/>
<rect x="536.9" y="274.6" width="1.5" height="5.2" rx="0.7" fill="#ececec"/><rect x="536.6" y="280.2" width="2" height="0.7" fill="#9a9a9a"/>
<path d="M503.4 272.6 l1.1 -1.6 l1.1 1.6 z" fill="#f2f2f2"/>
<rect x="488" y="283" width="4" height="0.8" fill="#e6e6e6"/><rect x="493" y="283.2" width="12" height="0.5" fill="#7c7c7c"/>
</g>
<rect x="550.4" y="284.4" width="2.2" height="176" fill="#434343"/><rect x="550.5" y="287.4" width="2" height="7.2" fill="#646464"/>
<g filter="url(#b1)" font-family="'Liberation Sans','Noto Sans CJK SC',sans-serif" font-size="3" fill="#c9c9c9">
<path d="M489.6 288.4 Q491.9 288.8 494.2 289.2 Q496.5 288.6 498.8 289.1 Q501.1 288.4 503.4 288.5 Q505.7 289.0 508.0 288.8 Q510.3 288.7 512.6 288.7 Q514.9 289.1 517.2 289.0" stroke="#f7f7f7" stroke-width="2.0" stroke-linecap="round" fill="none"/>
<path d="M519.6 289.3 Q521.9 289.0 524.2 289.3 Q526.5 289.4 528.9 288.3 Q531.2 288.5 533.5 288.3 Q535.8 288.5 538.1 289.2 Q540.5 288.7 542.8 289.1 Q545.1 289.0 547.4 289.0" stroke="#f7f7f7" stroke-width="2.0" stroke-linecap="round" fill="none"/>
<text x="490.8" y="294.9">1 柔边圆压力大小</text><text x="520.8" y="294.9">1 硬边圆</text>
<path d="M489.6 298.5 Q491.9 299.0 494.2 298.8 Q496.5 298.5 498.8 298.7 Q501.1 298.3 503.4 298.9 Q505.7 299.6 508.0 298.9 Q510.3 298.9 512.6 298.3 Q514.9 298.8 517.2 298.3" stroke="#f7f7f7" stroke-width="2.0" stroke-linecap="round" fill="none"/>
<path d="M519.6 298.5 Q521.9 298.9 524.2 298.4 Q526.5 298.7 528.9 298.7 Q531.2 298.3 533.5 298.4 Q535.8 298.5 538.1 298.3 Q540.5 298.0 542.8 298.7 Q545.1 298.2 547.4 299.3" stroke="#f7f7f7" stroke-width="2.0" stroke-linecap="round" fill="none"/>
<text x="490.8" y="304.5">1 硬边圆压力</text><text x="520.8" y="304.5">1 硬边圆压力大小</text>
<path d="M489.6 308.8 Q491.9 308.8 494.2 309.0 Q496.5 309.6 498.8 309.0 Q501.1 309.2 503.4 309.2 Q505.7 309.7 508.0 309.0 Q510.3 308.4 512.6 309.2 Q514.9 309.1 517.2 308.2" stroke="#f7f7f7" stroke-width="2.8" stroke-linecap="round" fill="none"/>
<path d="M519.6 309.0 Q521.9 309.4 524.2 309.1 Q526.5 308.9 528.9 308.7 Q531.2 309.1 533.5 308.4 Q535.8 308.1 538.1 308.2 Q540.5 308.6 542.8 308.9 Q545.1 309.2 547.4 308.7" stroke="#f7f7f7" stroke-width="2.8" stroke-linecap="round" fill="none"/>
<text x="490.8" y="314.5">1 柔边圆压力不透明</text><text x="520.8" y="314.5">1 硬边圆压力不透</text>
<path d="M489.6 318.5 Q491.9 318.5 494.2 318.3 Q496.5 317.7 498.8 318.9 Q501.1 318.8 503.4 318.2 Q505.7 317.6 508.0 318.7 Q510.3 318.2 512.6 318.6 Q514.9 318.4 517.2 318.2" stroke="#f7f7f7" stroke-width="2.8" stroke-linecap="round" fill="none"/>
<path d="M519.6 318.4 Q521.9 318.0 524.2 319.2 Q526.5 319.4 528.9 318.3 Q531.2 318.2 533.5 318.9 Q535.8 318.9 538.1 318.2 Q540.5 318.2 542.8 318.4 Q545.1 318.0 547.4 319.2" stroke="#f7f7f7" stroke-width="2.8" stroke-linecap="round" fill="none"/>
<text x="490.8" y="324.9">1 圆点硬 ★★</text><text x="520.8" y="324.9">1 圆钝形 ★★★★</text>
<path d="M489.6 329.2 Q491.9 328.6 494.2 329.1 Q496.5 329.1 498.8 328.8 Q501.1 329.0 503.4 329.6 Q505.7 329.0 508.0 328.7 Q510.3 328.5 512.6 329.2 Q514.9 329.5 517.2 329.6" stroke="#f7f7f7" stroke-width="2.8" stroke-linecap="round" fill="none"/>
<path d="M519.6 329.3 Q521.9 328.8 524.2 329.1 Q526.5 329.2 528.9 329.3 Q531.2 329.0 533.5 328.9 Q535.8 328.5 538.1 329.5 Q540.5 330.2 542.8 329.6 Q545.1 330.3 547.4 329.4" stroke="#f7f7f7" stroke-width="2.8" stroke-linecap="round" fill="none"/>
<text x="490.8" y="334.9">1 圆曲线</text><text x="520.8" y="334.9">1 圆扇形细硬毛刷</text>
<path d="M489.6 339.4 Q491.9 339.5 494.2 339.6 Q496.5 339.7 498.8 340.0 Q501.1 340.4 503.4 339.5 Q505.7 338.9 508.0 339.5 Q510.3 339.2 512.6 339.6 Q514.9 339.0 517.2 339.2" stroke="#f7f7f7" stroke-width="2.6" stroke-linecap="round" fill="none"/>
<text x="490.8" y="344.9">1 圆角低硬度</text>
<rect x="484" y="346.8" width="66" height="6.8" fill="#424242"/>
<path d="M486 349 l1.2 1.4 l1.2 -1.4" stroke="#bdbdbd" stroke-width="0.5" fill="none"/><rect x="489.4" y="348.6" width="3.6" height="2.8" fill="#d8d8d8"/><text x="495.4" y="351.6" fill="#e0e0e0" font-size="3.2">色彩试验</text>
<path d="M520 357.4 q6 -2.4 13 -1 t14 -0.6" stroke="#bfbfbf" stroke-width="0.9" stroke-dasharray="0.8 0.5" fill="none"/>
<text x="490.8" y="362.6">水墨细腻晕染</text><text x="520.8" y="362.6">喷枪柔边高密</text>
<path d="M512.6 360.4 l2.2 1 l-2.2 1 z" fill="#f2f2f2"/>
<path d="M490 366.9 q8 -1 14 0 t13 0.2" stroke="#f4f4f4" stroke-width="2.6" stroke-linecap="round" fill="none"/>
<path d="M521 366.9 q8 -1 14 0 t12 0.2" stroke="#f4f4f4" stroke-width="2.4" stroke-linecap="round" fill="none"/>
<text x="490.8" y="372.8">Kyle 的终极上墨</text><text x="520.8" y="372.8">1 硬边圆</text>
<path d="M489.6 376.9 Q491.9 377.3 494.2 377.1 Q496.5 377.3 498.8 377.1 Q501.1 377.2 503.4 376.5 Q505.7 376.6 508.0 376.4 Q510.3 376.6 512.6 376.8 Q514.9 376.3 517.2 376.7" stroke="#f7f7f7" stroke-width="2.8" stroke-linecap="round" fill="none"/>
<path d="M519.6 376.6 Q521.9 376.3 524.2 377.1 Q526.5 377.4 528.9 377.1 Q531.2 376.6 533.5 377.3 Q535.8 377.3 538.1 376.6 Q540.5 376.2 542.8 376.6 Q545.1 376.3 547.4 376.5" stroke="#f7f7f7" stroke-width="2.8" stroke-linecap="round" fill="none"/>
<text x="490.8" y="382.8">1 硬边圆压力不透</text><text x="520.8" y="382.8">1 圆钝</text>
<path d="M489.6 386.7 Q491.9 386.9 494.2 387.3 Q496.5 387.0 498.8 387.3 Q501.1 387.5 503.4 387.6 Q505.7 387.4 508.0 386.8 Q510.3 387.2 512.6 386.8 Q514.9 386.3 517.2 387.4" stroke="#f7f7f7" stroke-width="2.8" stroke-linecap="round" fill="none"/>
<path d="M519.6 387.6 Q521.9 387.9 524.2 386.6 Q526.5 387.1 528.9 387.4 Q531.2 388.1 533.5 386.7 Q535.8 386.4 538.1 387.6 Q540.5 387.4 542.8 386.6 Q545.1 386.9 547.4 387.5" stroke="#f7f7f7" stroke-width="2.8" stroke-linecap="round" fill="none"/>
<text x="490.8" y="393.0">1 硬边圆压力大小</text><text x="520.8" y="393.0">1 硬边</text>
<path d="M489.6 397.4 Q491.9 397.6 494.2 397.6 Q496.5 396.9 498.8 397.5 Q501.1 397.2 503.4 397.5 Q505.7 397.3 508.0 397.5 Q510.3 397.0 512.6 397.8 Q514.9 398.1 517.2 397.3" stroke="#f7f7f7" stroke-width="2.8" stroke-linecap="round" fill="none"/>
<path d="M519.6 397.6 Q521.9 397.1 524.2 397.9 Q526.5 397.3 528.9 398.1 Q531.2 397.9 533.5 397.4 Q535.8 397.7 538.1 397.9 Q540.5 397.5 542.8 397.8 Q545.1 397.8 547.4 397.8" stroke="#f7f7f7" stroke-width="2.8" stroke-linecap="round" fill="none"/>
<text x="490.8" y="403.5">平角画笔 (硬毛刷)</text><text x="520.8" y="403.5">平角画笔 (软)</text>
<path d="M489.6 406.9 Q491.9 406.9 494.2 407.5 Q496.5 407.1 498.8 407.1 Q501.1 406.8 503.4 407.0 Q505.7 407.2 508.0 407.3 Q510.3 407.0 512.6 407.3 Q514.9 407.5 517.2 407.3" stroke="#f7f7f7" stroke-width="2.8" stroke-linecap="round" fill="none"/>
<path d="M519.6 407.5 Q521.9 407.0 524.2 407.6 Q526.5 407.3 528.9 407.3 Q531.2 407.0 533.5 407.3 Q535.8 407.1 538.1 407.2 Q540.5 406.9 542.8 407.8 Q545.1 407.3 547.4 407.1" stroke="#f7f7f7" stroke-width="2.8" stroke-linecap="round" fill="none"/>
<text x="490.8" y="413.2">平点中等</text><text x="520.8" y="413.2">尖角 喷枪</text>
<path d="M489.6 418.0 Q491.9 418.6 494.2 417.8 Q496.5 417.9 498.8 417.9 Q501.1 417.4 503.4 418.0 Q505.7 417.9 508.0 417.3 Q510.3 418.0 512.6 417.7 Q514.9 417.2 517.2 418.0" stroke="#f7f7f7" stroke-width="2.8" stroke-linecap="round" fill="none"/>
<path d="M519.6 417.2 Q521.9 417.2 524.2 417.8 Q526.5 417.8 528.9 417.7 Q531.2 417.4 533.5 417.6 Q535.8 416.9 538.1 417.3 Q540.5 417.1 542.8 417.9 Q545.1 418.0 547.4 417.9" stroke="#f7f7f7" stroke-width="2.8" stroke-linecap="round" fill="none"/>
<text x="490.8" y="423.5">QT 铅笔</text><text x="520.8" y="423.5">粉笔 777</text>
<path d="M489.6 428.1 Q491.9 427.9 494.2 427.2 Q496.5 427.7 498.8 427.1 Q501.1 426.7 503.4 428.1 Q505.7 428.8 508.0 427.3 Q510.3 427.0 512.6 427.2 Q514.9 427.3 517.2 427.8" stroke="#f7f7f7" stroke-width="2.8" stroke-linecap="round" fill="none"/>
<path d="M519.6 428.1 Q521.9 427.5 524.2 428.1 Q526.5 427.7 528.9 428.0 Q531.2 428.0 533.5 427.1 Q535.8 426.8 538.1 427.7 Q540.5 427.6 542.8 427.5 Q545.1 426.9 547.4 427.6" stroke="#f7f7f7" stroke-width="2.8" stroke-linecap="round" fill="none"/>
<text x="490.8" y="433.5">飞溅大小</text><text x="520.8" y="433.5">26 炭笔纸带</text>
<path d="M489.6 437.4 Q491.9 437.8 494.2 437.6 Q496.5 437.1 498.8 436.9 Q501.1 437.1 503.4 437.7 Q505.7 438.1 508.0 436.9 Q510.3 437.2 512.6 437.4 Q514.9 437.3 517.2 436.8" stroke="#f7f7f7" stroke-width="2.2" stroke-linecap="round" fill="none"/>
<path d="M519.6 437.1 Q521.9 437.7 524.2 437.7 Q526.5 437.3 528.9 437.6 Q531.2 437.3 533.5 436.9 Q535.8 436.8 538.1 437.6 Q540.5 437.7 542.8 437.4 Q545.1 436.8 547.4 436.7" stroke="#f7f7f7" stroke-width="2.2" stroke-linecap="round" fill="none"/>
<text x="490.8" y="443.1">12 喷溅 ★★★★</text><text x="520.8" y="443.1">1 (方案)</text>
<path d="M489.6 447.5 Q491.9 446.8 494.2 446.9 Q496.5 447.1 498.8 446.9 Q501.1 446.9 503.4 447.3 Q505.7 447.5 508.0 446.7 Q510.3 447.3 512.6 447.5 Q514.9 448.2 517.2 447.5" stroke="#f7f7f7" stroke-width="2.2" stroke-linecap="round" fill="none"/>
<path d="M519.6 447.4 Q521.9 447.2 524.2 447.4 Q526.5 447.9 528.9 447.7 Q531.2 447.3 533.5 446.9 Q535.8 447.4 538.1 446.7 Q540.5 446.7 542.8 447.6 Q545.1 447.0 547.4 447.0" stroke="#f7f7f7" stroke-width="2.2" stroke-linecap="round" fill="none"/>
<text x="490.8" y="453.1">厚涂 湿画</text><text x="520.8" y="453.1">32 ★★★★★</text>
<path d="M489.6 456.4 Q490.9 456.0 492.2 456.4 Q493.5 456.2 494.8 456.9 Q496.1 457.4 497.4 456.4 Q498.7 455.9 500.0 456.4 Q501.3 456.0 502.6 456.8 Q503.9 456.1 505.2 456.7" stroke="#f7f7f7" stroke-width="1.6" stroke-linecap="round" fill="none"/>
<path d="M519.6 456.9 Q521.1 457.5 522.6 456.6 Q524.0 456.1 525.5 457.2 Q527.0 457.1 528.5 456.6 Q530.0 456.2 531.5 456.8 Q533.0 456.6 534.4 456.6 Q535.9 457.3 537.4 456.7" stroke="#f7f7f7" stroke-width="1.4" stroke-linecap="round" fill="none"/>
</g>
<rect x="518.5" y="364.7" width="30.3" height="9.9" fill="none" stroke="#c8732e" stroke-width="0.7"/>
<rect x="482.8" y="458.8" width="70.6" height="6.6" fill="#464646"/>
<g filter="url(#b1)"><path d="M485.4 461.4 l1.6 -0.9 v1.8 z" fill="#e8e8e8"/><rect x="487.6" y="461.2" width="25" height="0.5" fill="#8a8a8a"/><rect x="528" y="460.2" width="3" height="2.4" fill="#e2e2e2"/><rect x="536" y="460" width="2.4" height="2.8" fill="none" stroke="#bdbdbd" stroke-width="0.5"/><rect x="543" y="460" width="2.2" height="2.8" fill="none" stroke="#bdbdbd" stroke-width="0.5"/></g>
<rect x="554.4" y="234.4" width="78.6" height="214" fill="#494949"/>
<rect x="554.4" y="234.4" width="78.6" height="4" fill="#3c3c3c"/>
<rect x="554.4" y="238.4" width="78.6" height="7" fill="#404040"/>
<rect x="555" y="238.4" width="8.4" height="7" fill="#494949"/>
<rect x="553.4" y="234.4" width="1" height="214" fill="#2e2e2e"/>
<g filter="url(#b1)" font-family="'Liberation Sans','Noto Sans CJK SC',sans-serif" font-size="3.1" fill="#cdcdcd">
<text x="556.2" y="243.2" fill="#ececec" font-weight="700">图层</text>
<path d="M625.6 235.6 l0.9 0.7 l-0.9 0.7 M627 235.6 l0.9 0.7 l-0.9 0.7 M630.4 235.4 l1.5 1.5 m0 -1.5 l-1.5 1.5" stroke="#b0b0b0" stroke-width="0.45" fill="none"/>
<path d="M629 240.6 h2.4 m-2.4 0.9 h2.4 m-2.4 0.9 h2.4" stroke="#a8a8a8" stroke-width="0.4"/>
<rect x="556.4" y="247.6" width="21" height="4.8" fill="#3a3a3a"/><circle cx="558.6" cy="249.8" r="0.9" fill="none" stroke="#d8d8d8" stroke-width="0.5"/><text x="561" y="251.2">类型</text><path d="M575 249.4 l0.8 1 l0.8 -1" stroke="#aaa" stroke-width="0.4" fill="none"/>
<rect x="581.8" y="248.2" width="3" height="2.6" fill="#d8d8d8"/>
<circle cx="589.5" cy="249.8" r="1.4" fill="#d0d0d0"/>
<text x="594.6" y="251.2" fill="#d8d8d8" font-weight="700">T</text>
<rect x="600.5" y="248.2" width="2.6" height="3.2" fill="none" stroke="#d0d0d0" stroke-width="0.6"/>
<rect x="607.5" y="248.2" width="2.4" height="3" fill="#cfcfcf"/>
<circle cx="614.8" cy="248.6" r="1.1" fill="#f4f4f4"/>
<rect x="557" y="255" width="26.4" height="5" fill="#3a3a3a"/><path d="M559.6 256.2 l2 1.3 l-2 1.3 z" fill="#dadada"/><text x="588" y="258.9">不透明度: 100%</text><path d="M612 257 l0.8 1 l0.8 -1" stroke="#aaa" stroke-width="0.4" fill="none"/>
<text x="555.8" y="266.6">锁定:</text>
<rect x="565.2" y="263.8" width="2.6" height="2.8" fill="none" stroke="#d0d0d0" stroke-width="0.5" stroke-dasharray="0.6 0.4"/><path d="M571.4 266.6 l2.4 -2.8" stroke="#e0e0e0" stroke-width="0.7"/><path d="M578.7 263.6 v3.4 m-1.7 -1.7 h3.4" stroke="#d0d0d0" stroke-width="0.5"/><rect x="582.8" y="264" width="2.6" height="2.6" fill="none" stroke="#bdbdbd" stroke-width="0.5"/><rect x="588.3" y="264.4" width="2.6" height="2.4" fill="#e0e0e0"/>
<text x="594" y="266.6">填充: 100%</text><path d="M612 264.8 l0.8 1 l0.8 -1" stroke="#aaa" stroke-width="0.4" fill="none"/>
<rect x="554.4" y="270.2" width="78.6" height="5.8" fill="#3b3b3b"/>
<ellipse cx="558.2" cy="273.0" rx="1.5" ry="0.9" fill="none" stroke="#c4c4c4" stroke-width="0.5"/><circle cx="558.2" cy="273.0" r="0.45" fill="#c4c4c4"/>
<path d="M563.6 272.4 l0.8 1 l0.8 -1" stroke="#b8b8b8" stroke-width="0.45" fill="none"/>
<path d="M568.0 271.4 h1.6 l0.6 0.6 h2.8 v2.8 h-5 z" fill="#ececec"/>
<text x="575.4" y="274.4" fill="#ececec">1</text>
<rect x="557" y="278.4" width="2.4" height="2.2" fill="none" stroke="#6a6a6a" stroke-width="0.4"/><path d="M567.4 278.8 l1 0.8 l-1 0.8" stroke="#b8b8b8" stroke-width="0.45" fill="none"/>
<path d="M570.4 277.9 h1.6 l0.6 0.6 h2.8 v2.8 h-5 z" fill="#ececec"/>
<text x="577.2" y="280.8">组 2</text>
<ellipse cx="558.2" cy="286.5" rx="1.5" ry="0.9" fill="none" stroke="#c4c4c4" stroke-width="0.5"/><circle cx="558.2" cy="286.5" r="0.45" fill="#c4c4c4"/>
<path d="M567.2 286 l0.8 1 l0.8 -1" stroke="#b8b8b8" stroke-width="0.45" fill="none"/>
<path d="M570.4 284.9 h1.6 l0.6 0.6 h2.8 v2.8 h-5 z" fill="#ececec"/>
<text x="577.2" y="287.8">组 1</text>
<rect x="571.8" y="291.6" width="7.8" height="6" fill="#f4f4f4"/><path d="M571.8 293.6 h7.8 M571.8 295.6 h7.8 M574.4 291.6 v6 M577 291.6 v6" stroke="#d4d4d4" stroke-width="0.6"/>
<text x="582.6" y="295.8" fill="#e0e0e0">图层 17</text><text x="621.6" y="295.8" font-style="italic" fill="#d8d8d8">fx</text><path d="M626.4 294 l0.8 1 l0.8 -1" stroke="#aaa" stroke-width="0.4" fill="none"/>
<ellipse cx="577.4" cy="301.6" rx="1.2" ry="0.7" fill="none" stroke="#a8a8a8" stroke-width="0.4"/><text x="580.4" y="302.8">效果</text>
<ellipse cx="581.6" cy="306.6" rx="1.2" ry="0.7" fill="none" stroke="#a8a8a8" stroke-width="0.4"/><text x="584.8" y="307.8">描边</text>
<rect x="571.8" y="311.6" width="7.8" height="6" fill="#f4f4f4"/><path d="M571.8 313.6 h7.8 M571.8 315.6 h7.8 M574.4 311.6 v6 M577 311.6 v6" stroke="#d4d4d4" stroke-width="0.6"/>
<text x="582.6" y="315.8" fill="#e0e0e0">图层 7</text>
</g>
<rect x="554.4" y="320.4" width="78.6" height="10.4" fill="#5b5b5b"/>
<g filter="url(#b1)" font-family="'Liberation Sans','Noto Sans CJK SC',sans-serif" font-size="3.1" fill="#cdcdcd">
<ellipse cx="558.2" cy="325.6" rx="1.5" ry="0.9" fill="none" stroke="#c4c4c4" stroke-width="0.5"/><circle cx="558.2" cy="325.6" r="0.45" fill="#c4c4c4"/>
<rect x="571.8" y="322.4" width="7.8" height="6" fill="#f4f4f4"/><path d="M573.6 328.4 q0.4 -2 2 -2.2 q1.8 0.2 2.2 2.2 z" fill="#2a2a2a"/><circle cx="575.7" cy="324.8" r="1.2" fill="#d8d8d8" stroke="#555" stroke-width="0.3"/>
<text x="582.6" y="326.8" fill="#f2f2f2">图层 1 (合并)</text>
<ellipse cx="558.2" cy="336.8" rx="1.5" ry="0.9" fill="none" stroke="#c4c4c4" stroke-width="0.5"/><circle cx="558.2" cy="336.8" r="0.45" fill="#c4c4c4"/>
<rect x="571.8" y="333.6" width="7.8" height="6" fill="#f4f4f4"/><path d="M573.6 339.6 q0.4 -2 2 -2.2 q1.8 0.2 2.2 2.2 z" fill="#2a2a2a"/><circle cx="575.7" cy="336.0" r="1.2" fill="#d8d8d8" stroke="#555" stroke-width="0.3"/>
<text x="582.6" y="338" fill="#e0e0e0">图层 1</text>
<path d="M570.6 345.2 l1 0.8 l-1 0.8" stroke="#b8b8b8" stroke-width="0.45" fill="none"/>
<path d="M573.4 344.2 h1.6 l0.6 0.6 h2.8 v2.8 h-5 z" fill="#ececec"/>
<text x="580.2" y="347.2">组 1</text>
<rect x="554.4" y="440.4" width="78.6" height="0.5" fill="#3c3c3c"/>
<g fill="#d6d6d6"><path d="M580.6 443.6 a1.2 1.2 0 1 1 0.1 0 m2 0 a1.2 1.2 0 1 1 0.1 0" fill="none" stroke="#bcbcbc" stroke-width="0.5"/>
<text x="588" y="444.8" font-style="italic" font-size="3" fill="#d6d6d6">fx</text>
<rect x="594.4" y="442.2" width="3.2" height="2.6" /><circle cx="602.8" cy="443.6" r="1.4"/><path d="M608.4 442.4 h1.4 l0.5 0.5 h2 v2.2 h-3.9 z"/><rect x="615.6" y="442.2" width="2.8" height="2.8" fill="none" stroke="#d0d0d0" stroke-width="0.5"/><path d="M623 442.6 h2.4 v2.8 h-2.4 z M622.6 442.4 h3.2" fill="none" stroke="#d0d0d0" stroke-width="0.5"/></g>
</g>
<path d="M656.6 284.4 L650.4 294.3 L656.6 304.3" stroke="#111" stroke-opacity="0.5" stroke-width="4.4" stroke-linecap="round" stroke-linejoin="round" fill="none" filter="url(#b2)"/>
<path d="M656.6 284.4 L650.4 294.3 L656.6 304.3" stroke="#ececec" stroke-width="2.3" stroke-linecap="round" stroke-linejoin="round" fill="none"/>
</g>
</svg>

<!-- progress -->
<div class="abs time" style="left:14px">01:58:21</div>
<div id="track" class="abs"></div>
<div id="prog" class="abs"></div>
<div id="knob" class="abs"></div>
<div class="abs time" style="left:602px">02:05:48</div>

<!-- bottom controls -->
<div class="abs ctl" style="left:283px">倍速</div>
<div class="abs ctl" style="left:336px">高清</div>
<div class="abs ctl" style="left:388px">字幕</div>
<div class="abs ctl" style="left:440px">查找</div>
<div class="abs ctl" style="left:492px">选集</div>

<!-- bottom icons -->
<svg class="abs" style="left:0;top:550px" width="658" height="36" viewBox="0 550 658 36" fill="#fff" stroke="#fff" stroke-linejoin="round" stroke-linecap="round">
<path d="M25.6 565.6 L37 573 L25.6 580.4 Z" stroke-width="3"/>
<rect x="66.3" y="565.8" width="3.4" height="13.8" rx="0.8" stroke="none"/>
<path d="M80.8 567.2 V578.2 L72.8 572.7 Z" stroke-width="2.6"/>
<path d="M107.5 567.2 V578.2 L115.5 572.7 Z" stroke-width="2.6"/>
<rect x="118.3" y="565.8" width="3.4" height="13.8" rx="0.8" stroke="none"/>
<g fill="none" stroke-width="2.4">
<path d="M545.4 573 L549.4 566.5 H557.4 L561.4 573 L557.4 579.5 H549.4 Z"/>
<circle cx="553.4" cy="573" r="2.9" stroke-width="2.3"/>
<path d="M589.4 570 H593 L598.6 565.8 V580.6 L593 577 H589.4 Z" stroke-width="2.2"/>
<path d="M601.6 569.4 Q604 573.2 601.6 577" stroke-width="2.2"/>
<path d="M604.2 566 Q610.2 573.2 604.2 580.4" stroke-width="2.2"/>
<path d="M635.2 570 V567.2 Q635.2 565.7 636.7 565.7 H639.4 M643 565.7 H645.6 Q647.1 565.7 647.1 567.2 V570 M647.1 573.6 V576.4 Q647.1 577.9 645.6 577.9 H643 M639.4 577.9 H636.7 Q635.2 577.9 635.2 576.4 V573.6" stroke-width="2.3"/>
</g>
</svg>
<div class="abs" style="left:459px;top:553px;width:29px;height:11px;border-radius:6.5px;background:#3a2a27;border:0.8px solid #6b4b42;box-sizing:content-box"></div>
<div class="abs" style="left:465.5px;top:554px;font-size:8px;line-height:11px;font-weight:700;font-style:italic;color:#e9c98f;letter-spacing:-0.2px">SVIP</div>
</body>
</html>
